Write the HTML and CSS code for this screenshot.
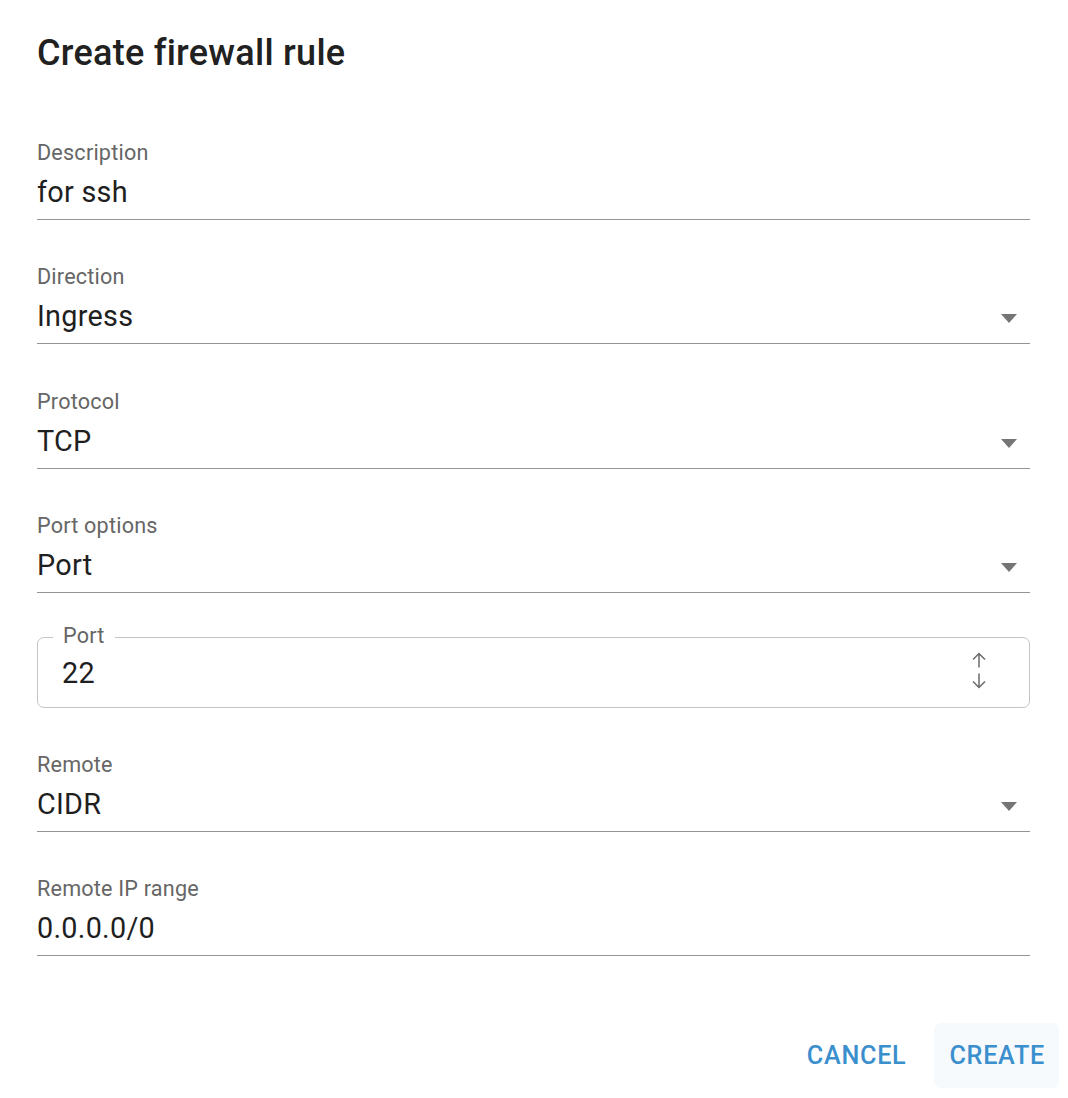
FILE: index.html
```html
<!DOCTYPE html>
<html lang="en">
<head>
<meta charset="utf-8">
<title>Create firewall rule</title>
<link rel="stylesheet" href="styles.css">
</head>
<body>
<div class="dialog">
  <h2 class="title">Create firewall rule</h2>
  <div class="content">
    <div class="field">
      <div class="label">Description</div>
      <div class="input-row"><span class="value">for ssh</span></div>
    </div>
    <div class="field">
      <div class="label">Direction</div>
      <div class="input-row"><span class="value">Ingress</span>
        <svg class="caret" width="16" height="9" viewBox="0 0 16 9"><polygon points="0,0 16,0 8,9" fill="#757575"/></svg>
      </div>
    </div>
    <div class="field">
      <div class="label">Protocol</div>
      <div class="input-row"><span class="value">TCP</span>
        <svg class="caret" width="16" height="9" viewBox="0 0 16 9"><polygon points="0,0 16,0 8,9" fill="#757575"/></svg>
      </div>
    </div>
    <div class="field">
      <div class="label">Port options</div>
      <div class="input-row"><span class="value">Port</span>
        <svg class="caret" width="16" height="9" viewBox="0 0 16 9"><polygon points="0,0 16,0 8,9" fill="#757575"/></svg>
      </div>
    </div>
    <div class="outlined">
      <span class="outlined-label">Port</span>
      <span class="value">22</span>
      <div class="spinner">
        <svg width="14" height="16" viewBox="0 0 14 16"><path d="M7 15.5V1.5M1 7.5L7 1.5L13 7.5" fill="none" stroke="#6b6b6b" stroke-width="1.5"/></svg>
        <svg width="14" height="16" viewBox="0 0 14 16"><path d="M7 0.5V14.5M1 8.5L7 14.5L13 8.5" fill="none" stroke="#6b6b6b" stroke-width="1.5"/></svg>
      </div>
    </div>
    <div class="field">
      <div class="label">Remote</div>
      <div class="input-row"><span class="value">CIDR</span>
        <svg class="caret" width="16" height="9" viewBox="0 0 16 9"><polygon points="0,0 16,0 8,9" fill="#757575"/></svg>
      </div>
    </div>
    <div class="field">
      <div class="label">Remote IP range</div>
      <div class="input-row"><span class="value">0.0.0.0/0</span></div>
    </div>
  </div>
  <div class="actions">
    <button class="btn btn-cancel">Cancel</button>
    <button class="btn btn-hover">Create</button>
  </div>
</div>
</body>
</html>
```

FILE: styles.css
```css
html, body {
  margin: 0;
  padding: 0;
  background: #ffffff;
}

body {
  font-family: Roboto, "Liberation Sans", Arial, sans-serif;
  color: rgba(0, 0, 0, 0.87);
}

.dialog {
  width: 1068px;
}

.title {
  margin: 0;
  padding: 24px 37px 0;
  font-size: 36px;
  font-weight: 500;
  line-height: 58px;
  letter-spacing: 0.0075em;
  color: #212121;
}

.content {
  padding: 0 38px 0 37px;
  display: flex;
  flex-direction: column;
}

.field {
  margin-top: 44.3px;
}

.field:first-child {
  margin-top: 58px;
}

.label {
  font-size: 21.6px;
  line-height: 25px;
  color: #666666;
  letter-spacing: 0.00938em;
}

.input-row {
  margin-top: 10px;
  height: 34px;
  padding-bottom: 10px;
  border-bottom: 1px solid #949494;
  display: flex;
  justify-content: space-between;
  align-items: flex-start;
}

.value {
  font-size: 28.8px;
  line-height: 34px;
  letter-spacing: 0.00938em;
  color: #1f1f1f;
}

.caret {
  margin-top: 15px;
  margin-right: 13px;
  flex: none;
}

.outlined {
  position: relative;
  margin-top: 44px;
  border: 1px solid #c4c4c4;
  border-radius: 7px;
  padding: 18px 0 0 24px;
  box-sizing: border-box;
  height: 71px;
  display: flex;
  justify-content: space-between;
  align-items: flex-start;
}

.outlined-label {
  position: absolute;
  top: -15px;
  left: 15px;
  padding: 0 10px;
  background: #ffffff;
  font-size: 21.6px;
  line-height: 25px;
  color: #666666;
  letter-spacing: 0.00938em;
}

.spinner {
  margin-top: -4px;
  margin-right: 43px;
  display: flex;
  flex-direction: column;
  gap: 5px;
}

.spinner svg {
  display: block;
}

.actions {
  display: flex;
  justify-content: flex-end;
  gap: 13px;
  padding: 0 9px 0 0;
  margin-top: 67px;
}

.btn {
  font-family: Roboto, "Liberation Sans", Arial, sans-serif;
  font-size: 25.2px;
  font-weight: 500;
  line-height: 44px;
  letter-spacing: 0.02857em;
  text-transform: uppercase;
  color: #3b8fcd;
  background: transparent;
  border: none;
  border-radius: 7px;
  padding: 10.5px 14px 10.5px 15px;
  cursor: pointer;
}

.btn-cancel {
  padding-right: 15px;
}

.btn-hover {
  background: #f6fafd;
}
```
